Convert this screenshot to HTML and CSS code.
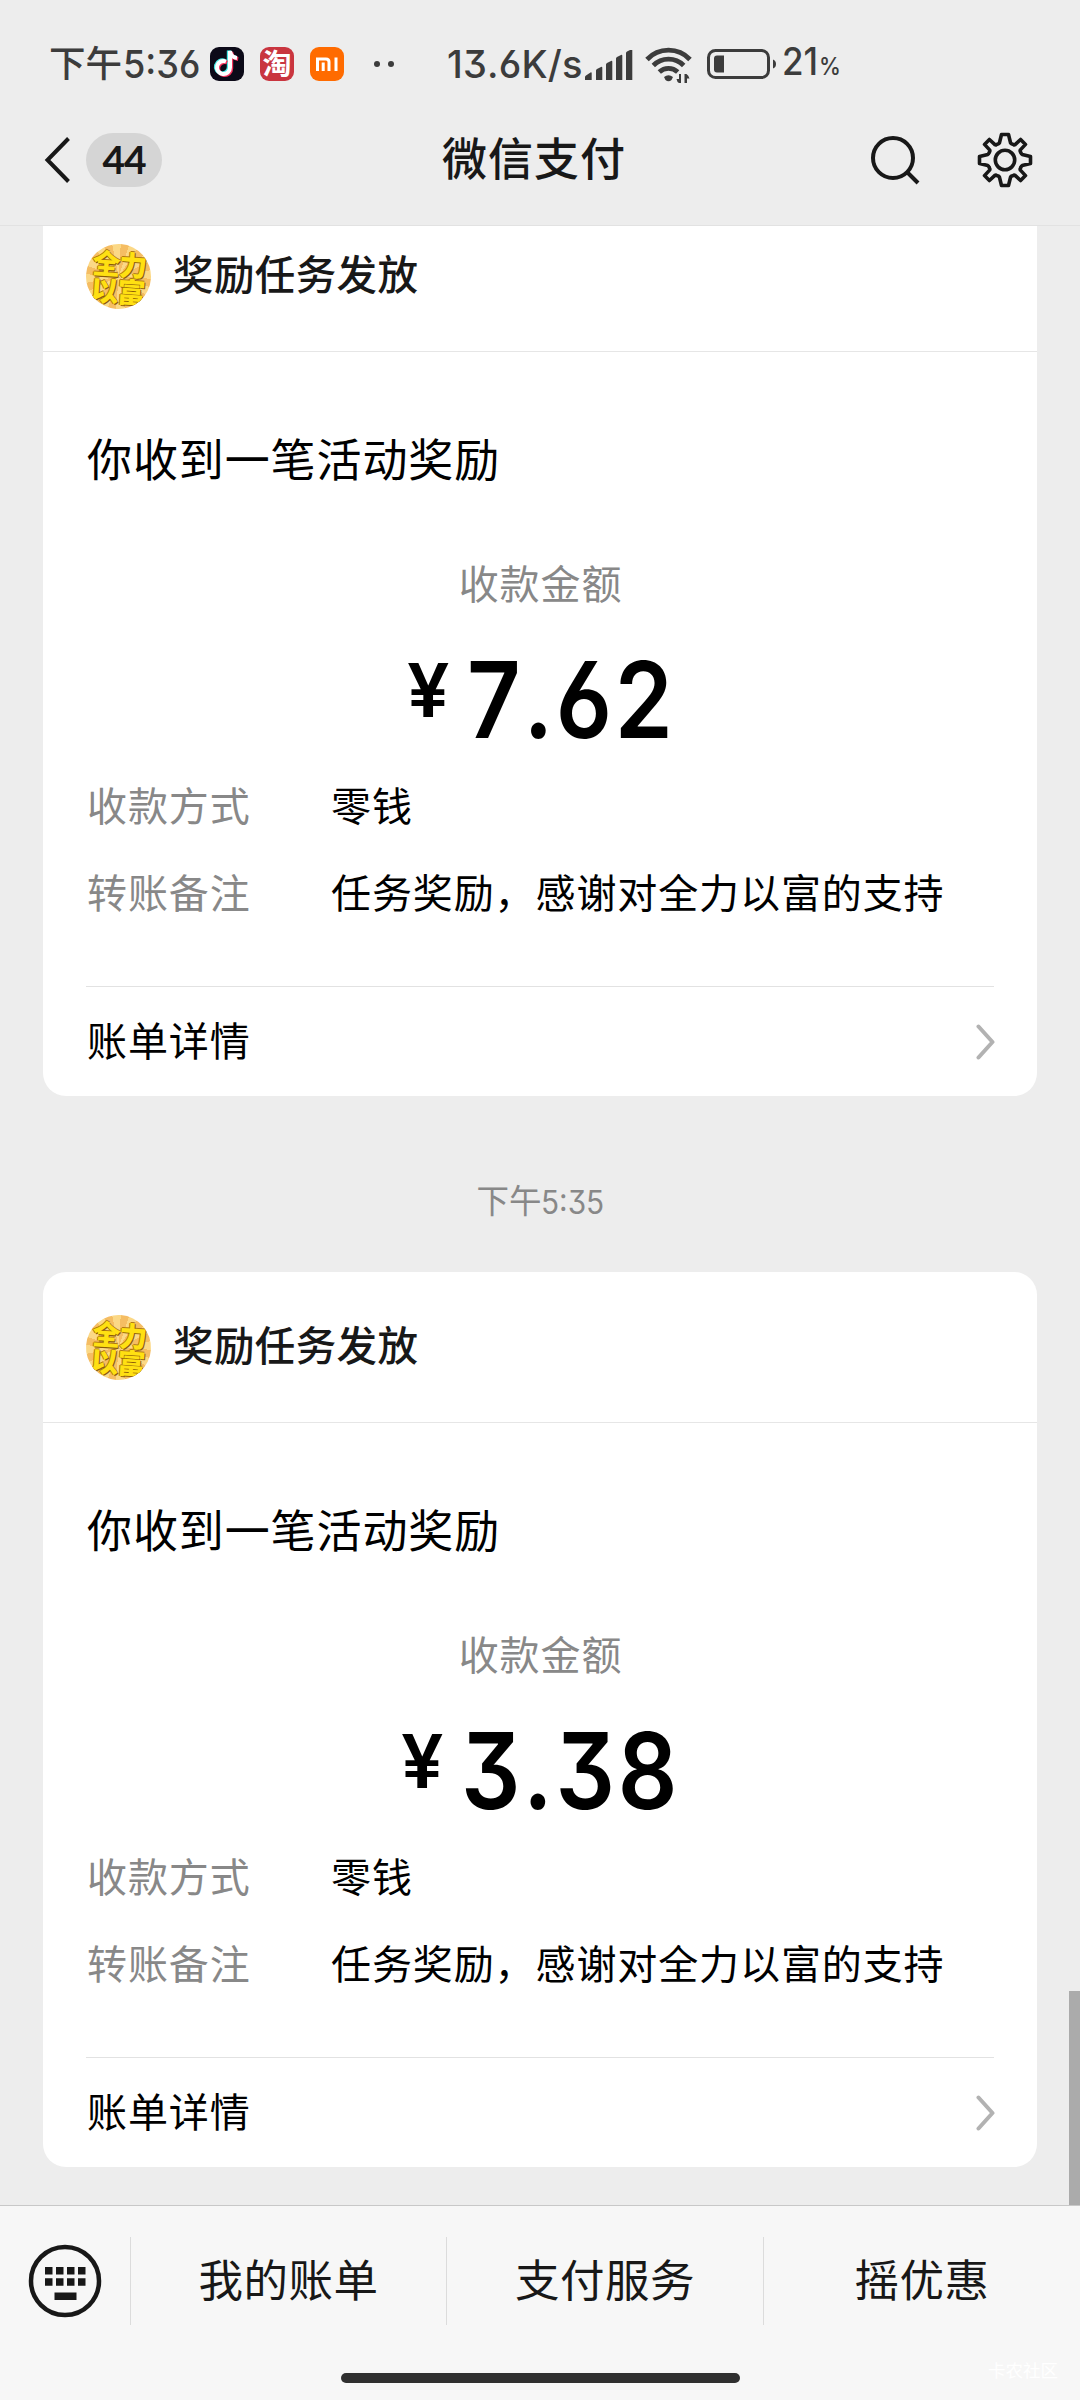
FILE: index.html
```html
<!DOCTYPE html>
<html lang="zh-CN">
<head>
<meta charset="utf-8">
<title>微信支付</title>
<link rel="stylesheet" href="styles.css">
</head>
<body>
<div class="screen">
  <div class="status">
    <div class="clock"><span class="clock-cn">下午</span><span class="latin">5:36</span></div>
    <svg class="app" viewBox="0 0 34 34"><rect width="34" height="34" rx="9" fill="#0c0a18"/>
      <g fill="none" stroke-width="4"><path d="M16 14.500a6.500 6.500 0 1 0 4 6V4c.5 4 3 6.500 7 7" stroke="#43e8e4" transform="translate(-1.200 -.6)"/><path d="M16 14.500a6.500 6.500 0 1 0 4 6V4c.5 4 3 6.500 7 7" stroke="#f5325c" transform="translate(1.200 1)"/><path d="M16 14.500a6.500 6.500 0 1 0 4 6V4c.5 4 3 6.500 7 7" stroke="#fff"/></g></svg>
    <div class="app taobao">淘</div>
    <svg class="app" viewBox="0 0 34 34"><rect width="34" height="34" rx="9" fill="#ff6b00"/><path d="M7.500 24V12h8.500q3 0 3 3v9M13.200 15.500V24M26 10.500V24" fill="none" stroke="#fff" stroke-width="3"/></svg>
    <div class="dots"><i></i><i></i></div>
    <div class="speed"><span class="latin">13.6K/s</span></div>
    <svg class="signal" viewBox="0 0 48 30" fill="#3c3c3c"><path d="M0 30v-3q0-1 1-1.500L5.500 22.500q1.200-.5 1.200.8V30zM11 30V20.500q0-1 1-1.500l4-2q1.300-.5 1.300.8V30zM21 30V14.500q0-1 1-1.500l4-2q1.300-.5 1.300.8V30zM31 30V8.500q0-1 1-1.500l4-2q1.300-.5 1.300.8V30zM41 30V3q0-1 1-1.500l4-2q1.300-.5 1.300.8V30z"/></svg>
    <svg class="wifi" viewBox="0 0 48 36"><g fill="none" stroke="#3c3c3c" stroke-width="4.800"><path d="M2 12.500a29.500 29.500 0 0 1 43 0M8.300 18.500a21.500 21.500 0 0 1 30.400 0M14.300 25a13.500 13.500 0 0 1 18.400 0"/></g><path d="M19 30q4.500-3.600 9 0l-1.500 3q-3 2.600-6 0zM36 27v9h-2q-2-1-2.500-4H34v-5zM39.500 36v-9h2q2 1 3 4.500H42V36z" fill="#3c3c3c"/></svg>
    <svg class="battery" viewBox="0 0 70 30"><rect x="1.500" y="1.500" width="60" height="27" rx="7" fill="none" stroke="#3c3c3c" stroke-width="3"/><path d="M10 6.500h7v17h-7q-3 0-3-3v-11q0-3 3-3zM66 10.500q3 1 3 4.500t-3 4.500z" fill="#3c3c3c"/></svg>
    <div class="percent"><span class="latin">21<small>%</small></span></div>
  </div>

  <header class="nav">
    <svg class="back" viewBox="0 0 28 48"><path d="M24.500 2.500 3.500 24l21 21.500" fill="none" stroke="#181818" stroke-width="4"/></svg>
    <span class="unread">44</span>
    <h1>微信支付</h1>
    <svg class="search" viewBox="0 0 52 52"><circle cx="23" cy="23" r="20" fill="none" stroke="#181818" stroke-width="4"/><path d="m37.500 37.500 10.500 10.500" stroke="#181818" stroke-width="4"/></svg>
    <svg class="gear" viewBox="-28 -28 56 56" fill="none" stroke="#181818" stroke-width="3.600" stroke-linejoin="round"><circle r="9.700"/><path d="M-3.500-25.500h7L5.600-17q.4.800 1.200.9l1.800.8q.8.300 1.500-.1L15.600-20.500 20.500-15.600 15.400-10.100q-.5.700-.1 1.500l.8 1.800q.3.800 1.100 1.200L25.500-3.500v7L17.200 5.600q-.8.400-1.100 1.200l-.8 1.800q-.4.800.1 1.500L20.500 15.600 15.600 20.500 10.100 15.400q-.7-.4-1.500-.1l-1.800.8q-.8.100-1.200.9L3.500 25.500h-7L-5.600 17q-.4-.8-1.200-.9l-1.800-.8q-.8-.3-1.500.1L-15.600 20.500-20.500 15.600-15.400 10.100q.5-.7.100-1.500l-.8-1.800q-.3-.8-1.100-1.200L-25.500 3.500v-7L-17.200-5.600q.8-.4 1.100-1.200l.8-1.800q.4-.8-.1-1.500L-20.500-15.600-15.600-20.500-10.100-15.400q.7.400 1.500.1l1.800-.8q.8-.1 1.200-.9z"/></svg>
  </header>

  <main class="chat">
    <article class="card">
      <div class="card-head"><div class="avatar"><span>全力</span><span>以富</span></div><h2>奖励任务发放</h2></div>
      <div class="card-body">
        <p class="lead">你收到一笔活动奖励</p>
        <p class="label">收款金额</p>
        <div class="amount"><span class="yen">¥</span><span class="num">7.62</span></div>
        <dl>
          <dt>收款方式</dt><dd>零钱</dd>
          <dt>转账备注</dt><dd>任务奖励，感谢对全力以富的支持</dd>
        </dl>
      </div>
      <div class="card-foot"><span>账单详情</span><svg viewBox="0 0 20 36"><path d="m2.500 2.500 14 15.500-14 15.500" fill="none" stroke="#b2b2b2" stroke-width="4" stroke-linecap="round" stroke-linejoin="round"/></svg></div>
    </article>
    <div class="time"><span class="time-cn">下午</span><span class="time-num">5:35</span></div>
    <article class="card">
      <div class="card-head"><div class="avatar"><span>全力</span><span>以富</span></div><h2>奖励任务发放</h2></div>
      <div class="card-body">
        <p class="lead">你收到一笔活动奖励</p>
        <p class="label">收款金额</p>
        <div class="amount"><span class="yen">¥</span><span class="num">3.38</span></div>
        <dl>
          <dt>收款方式</dt><dd>零钱</dd>
          <dt>转账备注</dt><dd>任务奖励，感谢对全力以富的支持</dd>
        </dl>
      </div>
      <div class="card-foot"><span>账单详情</span><svg viewBox="0 0 20 36"><path d="m2.500 2.500 14 15.500-14 15.500" fill="none" stroke="#b2b2b2" stroke-width="4" stroke-linecap="round" stroke-linejoin="round"/></svg></div>
    </article>
    <div class="scrollbar"></div>
  </main>

  <footer class="menu">
    <div class="menu-row">
      <div class="kbd"><svg viewBox="0 0 74 74"><circle cx="37" cy="37" r="34" fill="none" stroke="#181818" stroke-width="4.500"/><path d="M17 23h7.500v7.500H17zM28 23h7.500v7.500H28zM39 23h7.500v7.500H39zM50 23h7.500v7.500H50zM17 34.200h7.500v7.500H17zM28 34.200h7.500v7.500H28zM39 34.200h7.500v7.500H39zM50 34.200h7.500v7.500H50zM26.500 48.500h22V56h-22z" fill="#181818"/></svg></div>
      <div class="item">我的账单</div>
      <div class="item">支付服务</div>
      <div class="item">摇优惠</div>
    </div>
    <div class="home"></div>
    <div class="watermark">卡农社区</div>
  </footer>
</div>
</body>
</html>
```
FILE: styles.css
```css
* { box-sizing: border-box; margin: 0; padding: 0; }
body { background: #ededed; font-family: "Noto Sans CJK SC", sans-serif; color: #000; }
svg { display: block; flex: none; }
.screen { width: 1080px; height: 2400px; display: flex; flex-direction: column; background: #ededed; overflow: hidden; }

.status { height: 94px; padding: 34px 0 0 49px; display: flex; align-items: center; color: #3c3c3c; flex: none; }
.status > * { flex: none; }
.latin, .num, .yen, .time-num { font-family: Inter, sans-serif; font-feature-settings: "ss01", "cv09"; display: inline-block; transform-origin: left center; white-space: nowrap; }
.latin { font-size: 38px; line-height: 60px; font-weight: 500; transform: scaleX(.9); }
.clock { width: 161px; display: flex; align-items: center; height: 60px; white-space: nowrap; }
.clock .latin { transform: scaleX(.95); }
.clock-cn { font-size: 36.500px; line-height: 60px; font-weight: 500; margin: -4px 1px 0 0; }
.app { width: 34px; height: 34px; margin-right: 16px; }
.taobao { border-radius: 9px; background: #c9353f; color: #fff; font-size: 29px; font-weight: 700; line-height: 31px; text-align: center; }
.dots { display: flex; gap: 8px; margin: 0 53px 0 14px; }
.dots i { width: 6px; height: 6px; border-radius: 50%; background: #3c3c3c; }
.speed { width: 138px; }
.speed .latin { transform: none; letter-spacing: .2px; font-kerning: none; }
.signal { width: 48px; height: 30px; margin: 2px 12px 0 0; }
.wifi { width: 48px; height: 36px; margin: 2px 14px 0 0; }
.battery { width: 70px; height: 30px; margin-right: 5px; }
.percent .latin { transform: scaleX(.92); }
.percent small { font-size: 24px; margin-left: 1px; }

.nav { height: 132px; border-bottom: 1px solid #e2e2e2; display: flex; align-items: center; padding-left: 44px; flex: none; color: #181818; }
.back { width: 28px; height: 48px; margin-right: 14px; }
.unread { width: 76px; height: 54px; border-radius: 27px; background: #d5d5d5; font: 700 39px/53px Lato, sans-serif; letter-spacing: -1px; text-align: center; }
h1 { font-size: 45px; letter-spacing: 1px; line-height: 66px; font-weight: 500; margin: -5px 0 0 280px; width: 185px; white-space: nowrap; }
.search { width: 52px; height: 52px; margin: 2px 0 0 243px; }
.gear { width: 56px; height: 56px; margin-left: 55px; }

.chat { height: 1979px; position: relative; overflow: hidden; flex: none; }
.card { width: 994px; height: 895px; margin: 0 auto; background: #fff; border-radius: 23px; display: flex; flex-direction: column; }
.card:first-child { margin-top: -25px; }
.card-head { height: 151px; border-bottom: 1px solid #e6e6e6; display: flex; align-items: center; padding-left: 43px; gap: 22px; }
.avatar { width: 65px; height: 65px; border-radius: 50%; background: repeating-conic-gradient(#f5bd63 0 15deg, #fbd886 15deg 30deg); display: flex; flex-direction: column; align-items: center; justify-content: center; overflow: hidden; transform: rotate(4deg); }
.avatar span { font-size: 28px; line-height: 27px; height: 27px; font-weight: 900; color: #ffe012; text-shadow: 1px 1px #8a5a08, -1px 0 #b07a10, 0 -1px #b07a10; letter-spacing: -1px; white-space: nowrap; }
h2 { font-size: 40.500px; letter-spacing: .4px; line-height: 60px; font-weight: 500; color: #181818; margin-top: -6px; }
.card-body { height: 634px; padding: 75px 0 0 44px; }
.lead { font-size: 45px; letter-spacing: .9px; line-height: 61px; }
.label { font-size: 40px; letter-spacing: .9px; line-height: 60px; margin: 64px 43px 0 0; text-align: center; color: #888; }
.amount { height: 162px; margin-right: 44px; display: flex; justify-content: center; font-weight: 600; }
.yen { font-size: 74px; line-height: 90px; margin: 33px 18px 0 0; transform: scaleX(1.02); }
.num { font-size: 106px; line-height: 128px; margin: 24px -31px 0 0; letter-spacing: 3px; font-kerning: none; transform: scaleX(.88); }
dl { display: grid; grid-template-columns: 244px 1fr; row-gap: 27px; font-size: 40px; letter-spacing: .9px; line-height: 60px; white-space: nowrap; }
dt { color: #888; }
.card-foot { height: 110px; margin: 0 43px; border-top: 1px solid #e2e2e2; display: flex; align-items: center; justify-content: space-between; font-size: 40px; letter-spacing: .9px; line-height: 60px; }
.card-foot span { margin: -5px 0 0 1px; }
.card-foot svg { width: 20px; height: 36px; margin-right: -2px; }
.time { height: 176px; padding-top: 77px; display: flex; justify-content: center; line-height: 60px; color: #888; }
.time-cn { font-size: 32.500px; margin-top: -4px; }
.time-num { font-size: 32px; transform: scaleX(.93); margin: 0 -5px 0 -1px; }
.scrollbar { position: absolute; right: 0; bottom: 0; width: 11px; height: 214px; background: #ababab; }

.menu { height: 195px; background: #f7f7f7; border-top: 1px solid #c8c8c8; position: relative; flex: none; display: flex; flex-direction: column; align-items: center; }
.menu-row { width: 100%; height: 88px; margin-top: 31px; display: grid; grid-template-columns: 130px 316px 317px 317px; }
.kbd { padding: 7px 0 0 28px; }
.kbd svg { width: 74px; height: 74px; }
.item { border-left: 1px solid #dcdcdc; font-size: 44.500px; letter-spacing: .5px; line-height: 82px; text-align: center; color: #181818; }
.home { width: 399px; height: 10px; border-radius: 5px; background: #303030; margin-top: 48px; }
.watermark { position: absolute; left: 988px; top: 152px; font-size: 17.500px; line-height: 24px; color: #fff; white-space: nowrap; }
```
